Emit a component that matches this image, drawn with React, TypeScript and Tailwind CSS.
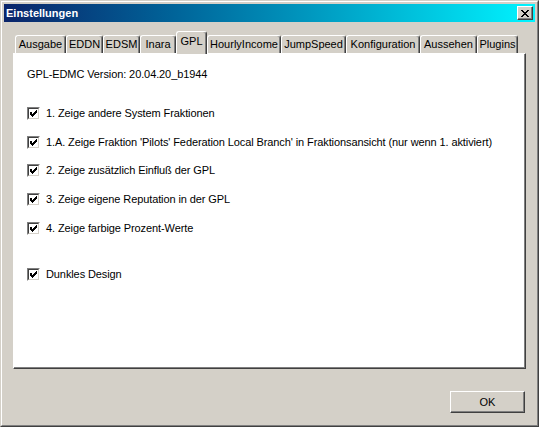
import type { ReactNode } from 'react';

type Tab = { label: string; width: string; selected?: boolean };

const tabs: Tab[] = [
  { label: 'Ausgabe', width: 'w-[51px]' },
  { label: 'EDDN', width: 'w-[37px]' },
  { label: 'EDSM', width: 'w-[37px]' },
  { label: 'Inara', width: 'w-[36px]' },
  { label: 'GPL', width: 'w-[31px]', selected: true },
  { label: 'HourlyIncome', width: 'w-[74px]' },
  { label: 'JumpSpeed', width: 'w-[65px]' },
  { label: 'Konfiguration', width: 'w-[74px]' },
  { label: 'Aussehen', width: 'w-[57px]' },
  { label: 'Plugins', width: 'w-[41px]' },
];

const options = [
  { label: '1. Zeige andere System Fraktionen', top: 'mt-[26px]' },
  {
    label:
      "1.A. Zeige Fraktion 'Pilots' Federation Local Branch' in Fraktionsansicht (nur wenn 1. aktiviert)",
    top: 'mt-[16px]',
  },
  { label: '2. Zeige zusätzlich Einfluß der GPL', top: 'mt-[15px]' },
  { label: '3. Zeige eigene Reputation in der GPL', top: 'mt-[16px]' },
  { label: '4. Zeige farbige Prozent-Werte', top: 'mt-[16px]' },
  { label: 'Dunkles Design', top: 'mt-[33px]' },
];

function Checkbox() {
  return (
    <span className="box-border flex h-[13px] w-[13px] shrink-0 border border-t-[#808080] border-l-[#808080] border-r-white border-b-white">
      <span className="box-border flex h-full w-full items-center justify-center border border-t-[#404040] border-l-[#404040] border-r-[#d4d0c8] border-b-[#d4d0c8] bg-white">
        <svg width="7" height="7" viewBox="0 0 7 7" shapeRendering="crispEdges">
          <path
            d="M6 0h1v1h-1zM5 1h1v1h-1zM0 2h1v1h-1zM4 2h1v1h-1zM0 3h1v1h-1zM1 3h1v1h-1zM3 3h1v1h-1zM6 1h1v2h-1zM5 2h1v2h-1zM4 3h1v2h-1zM0 4h1v1h-1zM1 4h1v2h-1zM2 4h1v3h-1zM3 4h1v2h-1zM1 2h1v1h-1z"
            fill="#000"
          />
        </svg>
      </span>
    </span>
  );
}

function Raised({ children, className }: { children: ReactNode; className: string }) {
  return (
    <div
      className={`box-border border border-t-white border-l-white border-r-[#404040] border-b-[#404040] bg-[#d4d0c8] shadow-[inset_-1px_-1px_0_#808080] ${className}`}
    >
      {children}
    </div>
  );
}

export default function App() {
  return (
    <div
      className="box-border h-[427px] w-[539px] border border-t-[#d4d0c8] border-l-[#d4d0c8] border-r-[#404040] border-b-[#404040] bg-[#d4d0c8] text-[11px] leading-[13px] text-black"
      style={{ fontFamily: '"Liberation Sans", Arial, sans-serif' }}
    >
      <div className="box-border flex h-full w-full flex-col border border-t-white border-l-white border-r-[#808080] border-b-[#808080] p-[2px]">
        <div className="flex h-[18px] shrink-0 items-center justify-between bg-gradient-to-r from-[#0a246a] to-[#00f4ff] pl-[2px] pr-[2px]">
          <span className="font-bold text-white">Einstellungen</span>
          <Raised className="flex h-[14px] w-[16px] items-center justify-center">
            <svg width="8" height="7" viewBox="0 0 8 7" shapeRendering="crispEdges">
              <path
                d="M0 0h2v1h-2zM6 0h2v1h-2zM1 1h2v1h-2zM5 1h2v1h-2zM2 2h4v1h-4zM3 3h2v1h-2zM2 4h4v1h-4zM1 5h2v1h-2zM5 5h2v1h-2zM0 6h2v1h-2zM6 6h2v1h-2z"
                fill="#000"
              />
            </svg>
          </Raised>
        </div>

        <div className="relative z-10 mt-[9px] ml-[11px] flex h-[22px] items-end">
          {tabs.map((tab) => (
            <div
              key={tab.label}
              className={`box-border flex shrink-0 justify-center rounded-t-[3px] border-t border-l border-r border-t-white border-l-white border-r-[#404040] bg-[#d4d0c8] shadow-[inset_-1px_0_0_#808080] ${tab.width} ${
                tab.selected ? '-mb-px h-[23px] pt-[3px]' : 'h-[18px] pt-[2px]'
              }`}
            >
              {tab.label}
            </div>
          ))}
        </div>

        <div className="ml-[9px] box-border flex h-[316px] w-[513px] flex-col border border-t-white border-l-white border-r-[#404040] border-b-[#404040] bg-white pl-[13px] pt-[14px] tracking-[-0.1px] shadow-[inset_-1px_-1px_0_#808080]">
          <div>GPL-EDMC Version: 20.04.20_b1944</div>
          {options.map((opt) => (
            <div key={opt.label} className={`flex h-[13px] items-center gap-[6px] ${opt.top}`}>
              <Checkbox />
              <span className="whitespace-nowrap">{opt.label}</span>
            </div>
          ))}
        </div>

        <div className="mt-[22px] mr-[10px] flex justify-end">
          <Raised className="flex h-[22px] w-[75px] items-center justify-center">
            OK
          </Raised>
        </div>
      </div>
    </div>
  );
}
